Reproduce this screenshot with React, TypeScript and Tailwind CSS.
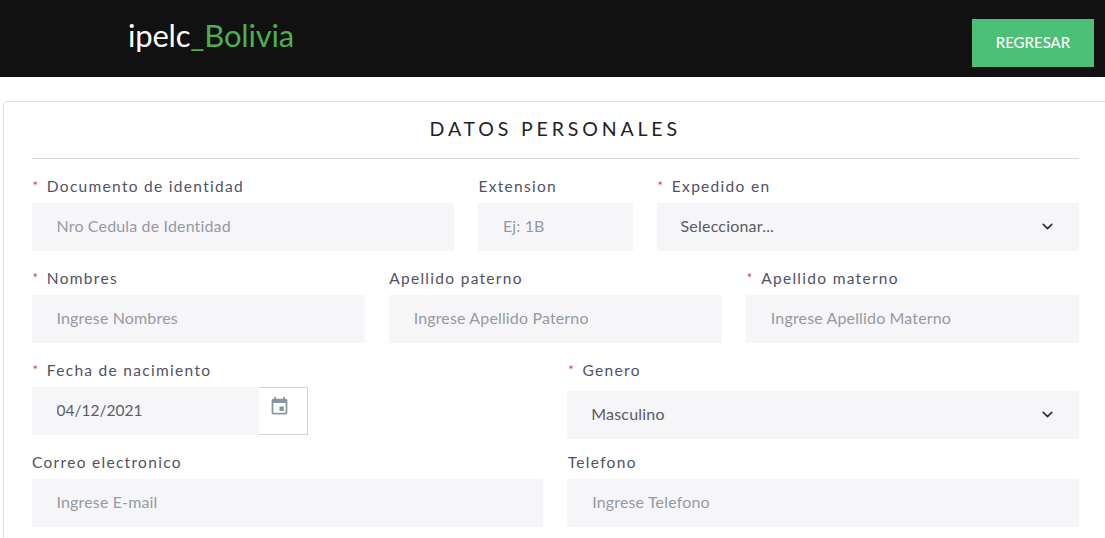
import { ChevronDown } from 'lucide-react';

const fontStack = 'font-["Lato","Noto_Sans",sans-serif]';

interface FieldProps {
  label: string;
  required?: boolean;
  span: string;
  children: React.ReactNode;
  className?: string;
}

function Field({ label, required, span, children, className = 'pb-1' }: FieldProps) {
  return (
    <div className={`${span} ${className}`}>
      <label className="flex h-7 items-start pl-[0.5px] pt-[1px] text-[15.5px] leading-5 tracking-[1.3px] text-[#53525f]">
        {required && <span className="ml-[0.5px] mr-[7.5px] text-[13px] text-[#e0356f]">*</span>}
        {label}
      </label>
      {children}
    </div>
  );
}

function TextInput({ placeholder }: { placeholder: string }) {
  return (
    <input
      type="text"
      placeholder={placeholder}
      className="block h-12 w-full bg-[#f6f6f9] pb-[3px] pl-[25px] pr-3 text-[16px] tracking-[0.15px] text-[#495057] outline-none placeholder:text-[#969aa2]"
    />
  );
}

function SelectInput({ value }: { value: string }) {
  return (
    <div className="relative h-12 w-full bg-[#f6f6f9]">
      <select
        defaultValue={value}
        className="h-12 w-full appearance-none bg-transparent pb-[2px] pl-6 pr-10 text-[16px] tracking-[0.2px] text-[#5a5a64] outline-none"
      >
        <option>{value}</option>
      </select>
      <ChevronDown className="pointer-events-none absolute right-[23px] top-[15px] h-[17px] w-[17px] text-[#33333c]" strokeWidth={2.4} />
    </div>
  );
}

export default function App() {
  return (
    <div className={`h-[538px] w-[1105px] overflow-hidden bg-white ${fontStack}`}>
      <header className="flex h-[77px] items-start justify-between bg-[#111111] pl-[128px] pr-[11px]">
        <div className="pt-[13px] text-[31px] font-normal leading-[44px] tracking-[-0.2px] text-white">
          ipelc<span className="text-[#4caf50]">_Bolivia</span>
        </div>
        <button className="mt-[19px] h-12 w-[122px] bg-[#4cc076] pb-[2px] text-[15px] font-medium text-white">REGRESAR</button>
      </header>

      <main className="ml-[3px] mt-6 h-[437px] rounded-tl-[5px] border-l border-t border-[#dedede] pl-[27.5px] pr-[26px]">
        <div className="flex h-[57px] items-center justify-center border-b border-[#d5d5d5] pb-[2px]">
          <h1 className="text-[19.5px] font-normal tracking-[3.85px] text-[#222226]">DATOS PERSONALES</h1>
        </div>

        <form className="mt-4 grid grid-cols-12 gap-x-6 gap-y-3">
          <Field span="col-span-5" label="Documento de identidad" required>
            <TextInput placeholder="Nro Cedula de Identidad" />
          </Field>
          <Field span="col-span-2" label="Extension">
            <TextInput placeholder="Ej: 1B" />
          </Field>
          <Field span="col-span-5" label="Expedido en" required>
            <SelectInput value="Seleccionar..." />
          </Field>

          <Field span="col-span-4" label="Nombres" required>
            <TextInput placeholder="Ingrese Nombres" />
          </Field>
          <Field span="col-span-4" label="Apellido paterno">
            <TextInput placeholder="Ingrese Apellido Paterno" />
          </Field>
          <Field span="col-span-4" label="Apellido materno" required>
            <TextInput placeholder="Ingrese Apellido Materno" />
          </Field>

          <Field span="col-span-6" label="Fecha de nacimiento" required>
            <div className="flex h-12">
              <input
                type="text"
                defaultValue="04/12/2021"
                className="h-12 w-[227.5px] bg-[#f6f6f9] pb-[2px] pl-[25px] text-[15.5px] text-[#5a5f66] outline-none"
              />
              <div className="h-12 w-[49px] border border-l-0 border-[#d2d2d6] pl-[10px] pt-[8px]">
                <svg viewBox="0 0 24 24" className="h-[21px] w-[21px] fill-[#8796a5]">
                  <path d="M17 12h-5v5h5v-5zM16 1v2H8V1H6v2H5c-1.11 0-1.99.9-1.99 2L3 19c0 1.1.89 2 2 2h14c1.1 0 2-.9 2-2V5c0-1.1-.9-2-2-2h-1V1h-2zm3 18H5V8h14v11z" />
                </svg>
              </div>
            </div>
          </Field>
          <Field span="col-span-6" label="Genero" required className="">
            <div className="pt-1">
              <SelectInput value="Masculino" />
            </div>
          </Field>

          <Field span="col-span-6" label="Correo electronico">
            <TextInput placeholder="Ingrese E-mail" />
          </Field>
          <Field span="col-span-6" label="Telefono">
            <TextInput placeholder="Ingrese Telefono" />
          </Field>
        </form>
      </main>
    </div>
  );
}
